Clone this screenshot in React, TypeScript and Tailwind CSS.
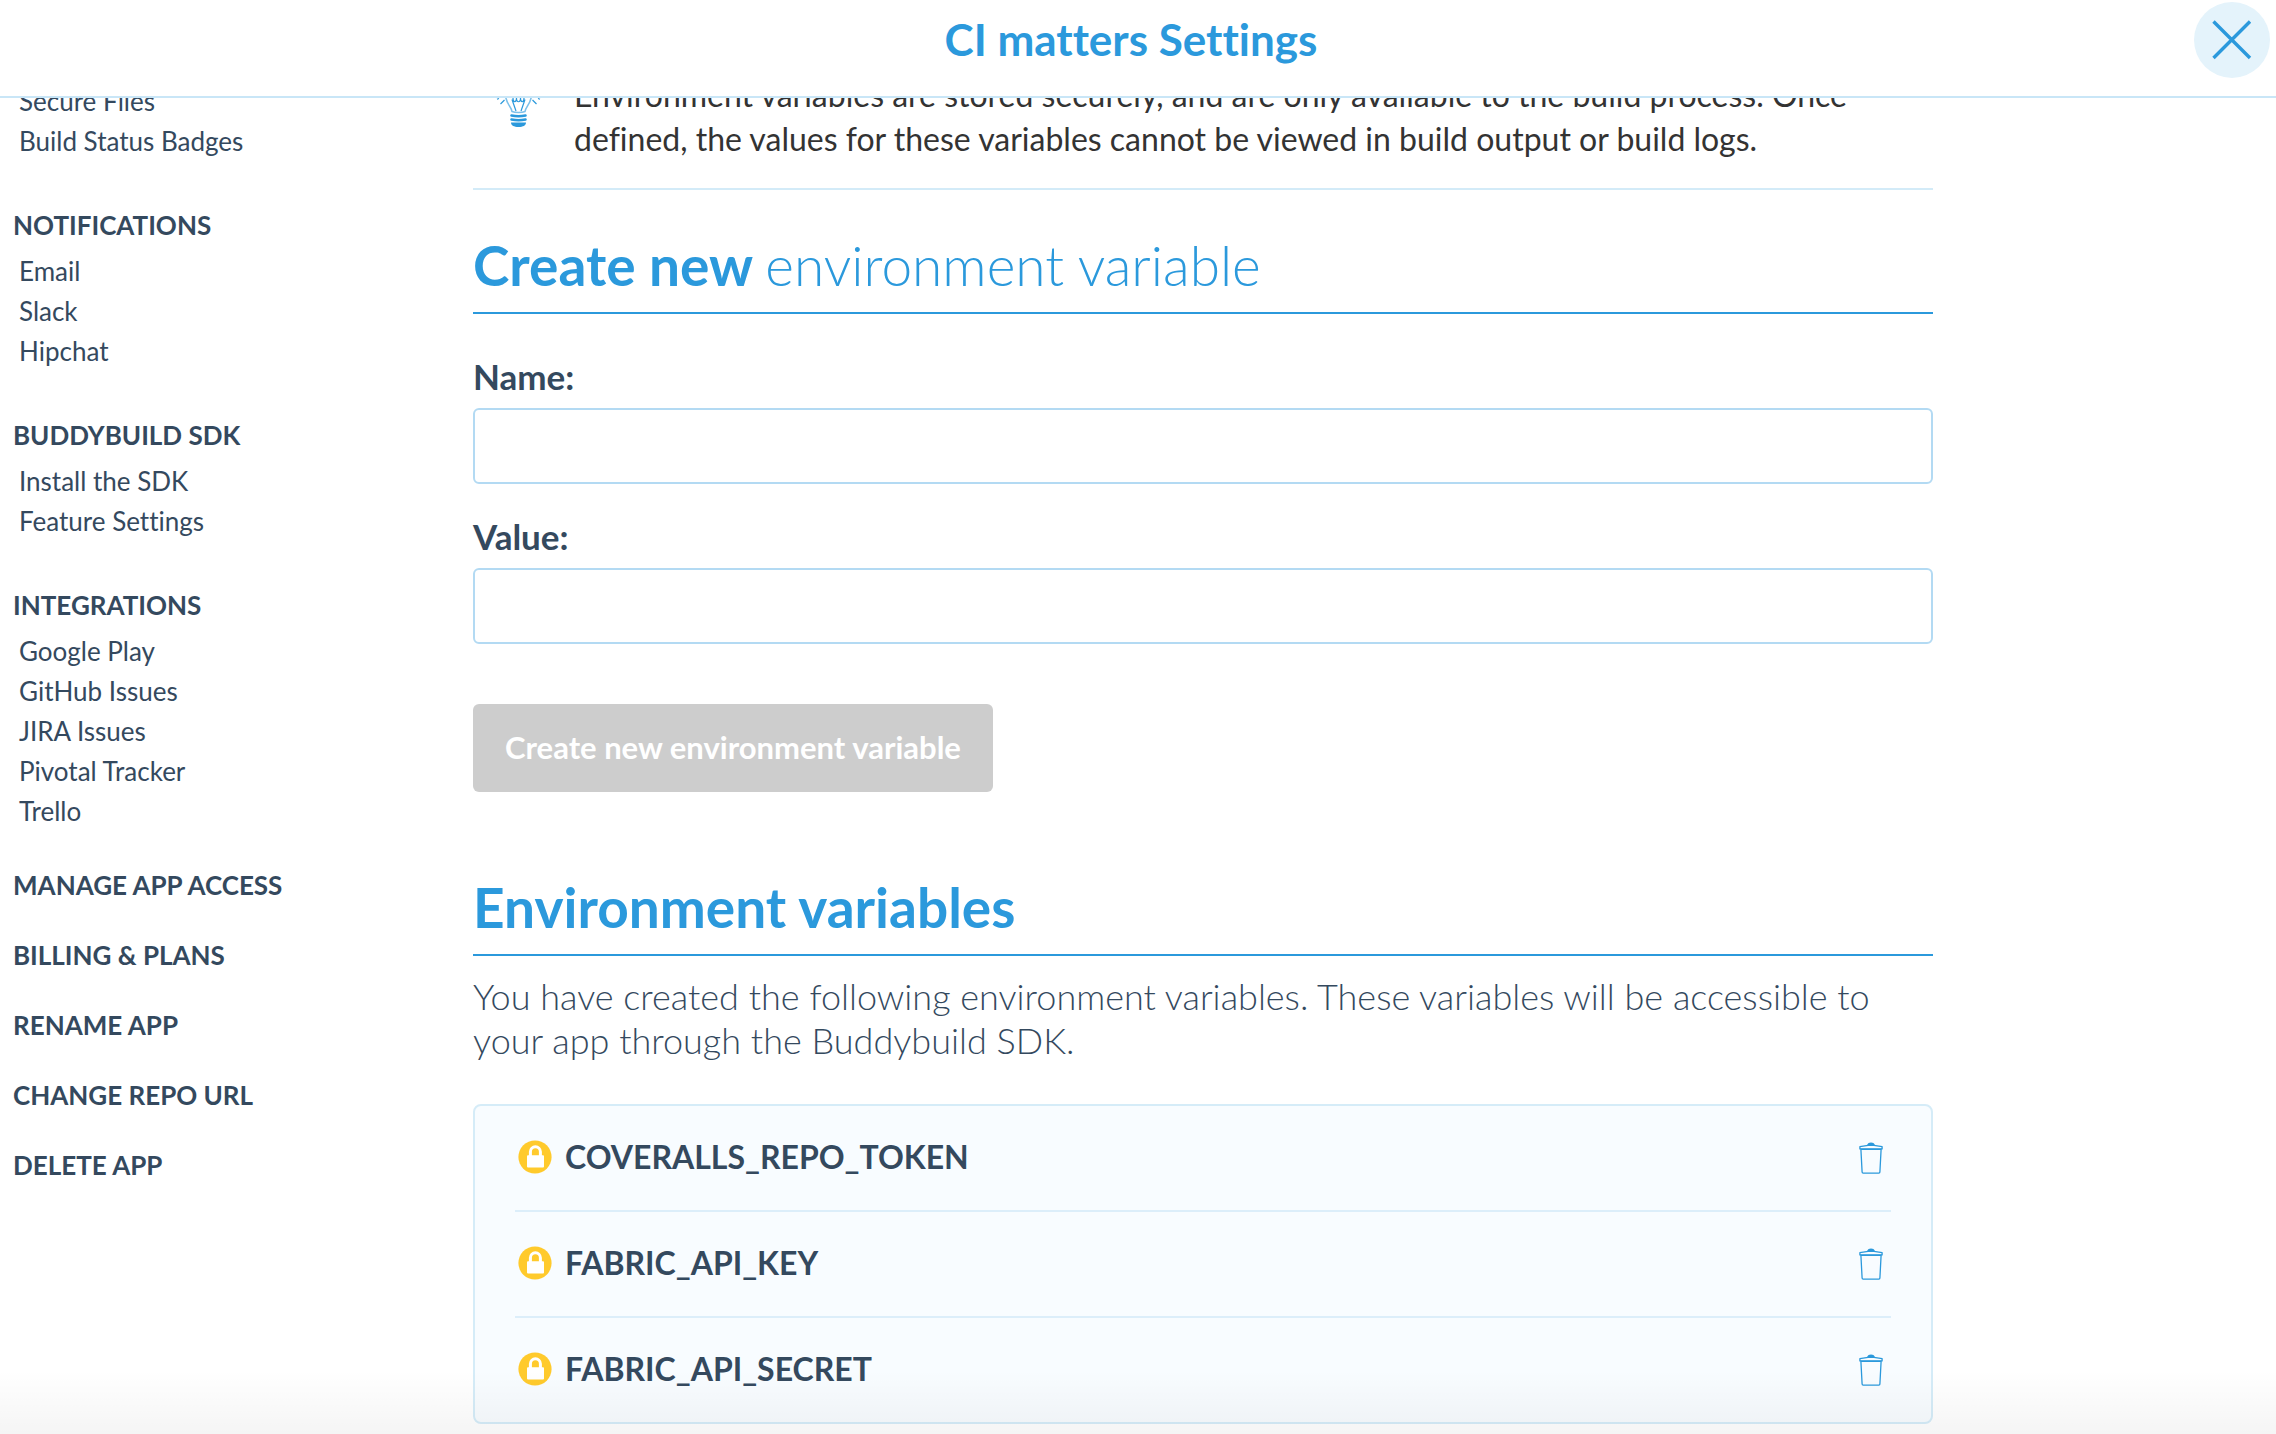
import type { ReactNode } from "react";

type NavGroup = { title: string | null; links: string[] };

const groups: NavGroup[] = [
  { title: null, links: ["Secure Files", "Build Status Badges"] },
  { title: "NOTIFICATIONS", links: ["Email", "Slack", "Hipchat"] },
  { title: "BUDDYBUILD SDK", links: ["Install the SDK", "Feature Settings"] },
  {
    title: "INTEGRATIONS",
    links: ["Google Play", "GitHub Issues", "JIRA Issues", "Pivotal Tracker", "Trello"],
  },
];

const actions = ["MANAGE APP ACCESS", "BILLING & PLANS", "RENAME APP", "CHANGE REPO URL", "DELETE APP"];

const variables = ["COVERALLS_REPO_TOKEN", "FABRIC_API_KEY", "FABRIC_API_SECRET"];

function CloseIcon() {
  return (
    <svg viewBox="0 0 40 40" className="size-10" fill="none" stroke="#2b99dc" strokeWidth="3.4" aria-hidden="true">
      <path d="M1.5 1.5 38 38M38 1.5 1.5 38" />
    </svg>
  );
}

function BulbIcon() {
  return (
    <svg viewBox="0 0 46 54" className="h-[54px] w-[46px] shrink-0" fill="none" stroke="#2b99dc" aria-hidden="true">
      <path
        d="M16 38.5c-.6-5-6.500-8-6.500-17a13 13 0 0 1 26 0c0 9-5.900 12-6.500 17-3 1.300-10 1.300-13 0Z"
        stroke="#7cc0ea"
        strokeWidth="1.600"
      />
      <path d="M20 38 16 26.500M25 38l4-11.500M17 25c0 5 3.500 5 3.500 0 0 5 4 5 4 0 0 5 3.500 5 3.500 0" strokeWidth="1.200" />
      <path d="m8.500 27-4 4M36.500 27l4 4M3 25.500l-2 .8M42 25.500l2 .8" strokeWidth="1.200" />
      <path d="M15.500 42.500q7 1.500 14 0M15.500 46.500q7 1.500 14 0" strokeWidth="2.600" strokeLinecap="round" />
      <path d="M15 49.500h15c0 3-3 4.500-7.500 4.500s-7.500-1.500-7.500-4.500Z" fill="#2b99dc" stroke="none" />
    </svg>
  );
}

function LockIcon() {
  return (
    <svg viewBox="0 0 34 34" className="size-[34px] shrink-0" aria-hidden="true">
      <circle cx="17" cy="17" r="16.600" fill="#ffca2c" />
      <path d="M12.400 17v-5.200a5 5 0 0 1 10 0V17" fill="none" stroke="#fff" strokeWidth="3" />
      <rect x="9" y="15.300" width="17" height="12.300" rx="1" fill="#fff" />
    </svg>
  );
}

function TrashIcon() {
  return (
    <svg viewBox="0 0 24 32" className="h-8 w-6" fill="none" stroke="#2b99dc" strokeWidth="1.300" aria-hidden="true">
      <path d="M8 3.200C8.800 1 10 .4 12 .4s3.200.6 4 2.800Z" fill="#2b99dc" stroke="none" />
      <path d="M.9 4.700 9 3.400h6l8.100 1.300v2.200H.9Z" strokeLinejoin="round" />
      <path d="M1.900 7.300 3.100 30c0 .8.400 1.100 1.100 1.100h15.600c.7 0 1.100-.3 1.100-1.100l1.200-22.700Z" />
    </svg>
  );
}

function SectionHeading({ children }: { children: ReactNode }) {
  return (
    <h2 className="border-b-2 border-[#2b99dc] pb-[18px] text-[55px] leading-[58px] font-bold text-[#2b99dc]">
      {children}
    </h2>
  );
}

function Field({ id, label }: { id: string; label: string }) {
  return (
    <div className="flex flex-col gap-2.5">
      <label htmlFor={id} className="text-[35px] leading-[44px] font-bold">
        {label}
      </label>
      <input
        id={id}
        type="text"
        className="h-[76px] w-full rounded-md border-2 border-[#b3daf3] bg-white px-4 text-[32px] outline-none"
      />
    </div>
  );
}

export default function App() {
  return (
    <div className="relative flex h-screen flex-col overflow-hidden bg-white font-['Lato',sans-serif] text-[#34495e] [font-variant-ligatures:none]">
      <header className="relative z-10 flex h-[98px] shrink-0 items-start justify-end border-b-2 border-[#c9e6f7] bg-white pt-0.5 pr-1.5">
        <h1 className="flex-1 pt-[15px] pl-[68px] text-center text-[44px] leading-[44px] font-bold text-[#2b99dc]">
          CI matters Settings
        </h1>
        <button
          type="button"
          aria-label="Close"
          className="flex size-[76px] items-center justify-center rounded-full bg-[#e4f3fb]"
        >
          <CloseIcon />
        </button>
      </header>

      <div className="flex min-h-0 flex-1 overflow-hidden">
        <nav aria-label="Settings" className="-mt-[17px] w-[473px] shrink-0 text-[26px] leading-10">
          {groups.map((group) => (
            <section key={group.links[0]} className="mb-11">
              {group.title && <h3 className="mb-1.5 pl-[13px] font-bold">{group.title}</h3>}
              <ul className="pl-[19px]">
                {group.links.map((link) => (
                  <li key={link}>
                    <a href="#">{link}</a>
                  </li>
                ))}
              </ul>
            </section>
          ))}
          <ul className="-mt-2.5 flex flex-col gap-[30px] pl-[13px] font-bold">
            {actions.map((action) => (
              <li key={action}>
                <a href="#">{action}</a>
              </li>
            ))}
          </ul>
        </nav>

        <main className="-mt-[25px] max-w-[1460px] flex-1">
          <aside className="flex gap-[32px] border-b-2 border-[#d3ebf8] pb-[27px] pl-[23px] text-[32px] leading-[44px] text-[#333]">
            <BulbIcon />
            <p className="max-w-[1300px]">
              Environment variables are stored securely, and are only available to the build process. Once
              <br />
              defined, the values for these variables cannot be viewed in build output or build logs.
            </p>
          </aside>

          <form className="pt-[46px]">
            <SectionHeading>
              Create new <span className="font-light">environment variable</span>
            </SectionHeading>
            <div className="flex flex-col gap-[30px] pt-10">
              <Field id="variable-name" label="Name:" />
              <Field id="variable-value" label="Value:" />
            </div>
            <button
              type="button"
              disabled
              className="mt-[60px] h-[88px] rounded-md bg-[#cdcdcd] px-8 pb-0.5 text-[31px] font-bold text-white"
            >
              Create new environment variable
            </button>
          </form>

          <section className="pt-[86px]">
            <SectionHeading>Environment variables</SectionHeading>
            <p className="pt-[18px] text-[36px] leading-[44px] font-light">
              You have created the following environment variables. These variables will be accessible to
              <br />
              your app through the Buddybuild SDK.
            </p>
            <ul className="mt-[42px] rounded-lg border-2 border-[#d5ecf8] bg-[#f8fcff] px-10">
              {variables.map((name) => (
                <li
                  key={name}
                  className="flex h-[106px] items-center gap-[13px] border-b-2 border-[#dceefa] px-[3px] pb-0.5 last:h-[104px] last:border-b-0"
                >
                  <LockIcon />
                  <span className="flex-1 text-[32px] leading-10 font-bold">{name}</span>
                  <button type="button" aria-label={`Delete ${name}`} className="mt-0.5 mr-[5px]">
                    <TrashIcon />
                  </button>
                </li>
              ))}
            </ul>
          </section>
        </main>
      </div>

      <div className="pointer-events-none absolute inset-x-0 bottom-0 h-16 bg-linear-to-t from-black/4 to-transparent" />
    </div>
  );
}
